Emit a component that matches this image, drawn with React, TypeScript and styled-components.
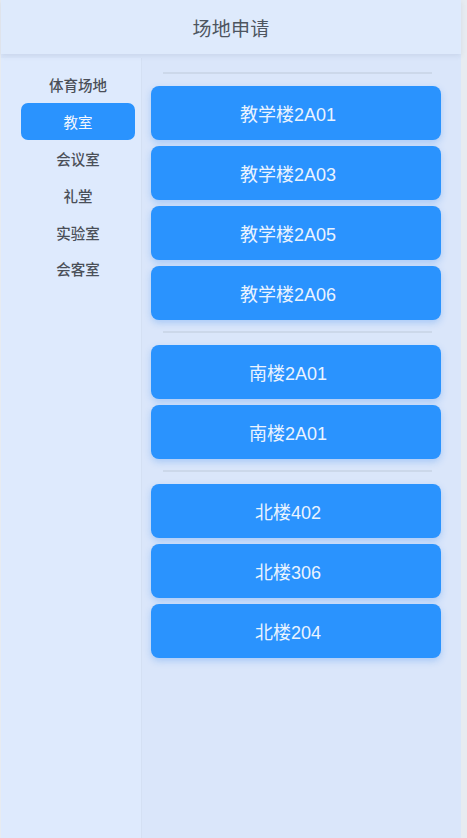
import React from "react";
import styled, { createGlobalStyle } from "styled-components";

const Global = createGlobalStyle`
  html, body { margin: 0; padding: 0; background: #e7ebf1; }
  body { font-family: "Liberation Sans", "Noto Sans CJK SC", sans-serif; }
  #root { height: 838px; }
`;

const Page = styled.div`
  width: 460px;
  height: 838px;
  margin-left: 1px;
  display: flex;
  flex-direction: column;
  background: #dae6fa;
`;

const Header = styled.header`
  position: relative;
  z-index: 2;
  height: 54px;
  flex: none;
  display: flex;
  align-items: center;
  justify-content: center;
  background: #deeafc;
  box-shadow: 0 2px 5px rgba(60, 80, 120, 0.1);
  color: #4d5560;
  font-family: "Noto Sans CJK SC", sans-serif;
  font-size: 19px;
  letter-spacing: 0.3px;
`;

const Body = styled.div`
  flex: 1;
  display: flex;
  min-height: 0;
  padding-top: 4px;
`;

const Sidebar = styled.nav`
  width: 141px;
  flex: none;
  box-sizing: border-box;
  padding: 8.5px 6px 0 20px;
  background: #deeafd;
  border-right: 1px solid #d4e0f3;
  display: flex;
  flex-direction: column;
`;

const NavItem = styled.div<{ $active?: boolean }>`
  height: 36.8px;
  display: flex;
  align-items: center;
  justify-content: center;
  border-radius: 7px;
  font-family: "Noto Sans CJK SC", sans-serif;
  font-size: 14.5px;
  font-weight: ${(p) => (p.$active ? 400 : 500)};
  color: ${(p) => (p.$active ? "#f4f8ff" : "#4a4f58")};
  background: ${(p) => (p.$active ? "#2a93fe" : "transparent")};
`;

const Content = styled.main`
  flex: 1;
  box-sizing: border-box;
  padding: 14.3px 20px 0 9px;
  display: flex;
  flex-direction: column;
`;

const Group = styled.section`
  display: flex;
  flex-direction: column;
  gap: 6px;
  margin-bottom: 11.5px;
`;

const Divider = styled.div`
  height: 2px;
  margin: 0 9px 11.5px 12px;
  background: #ccd8ea;
`;

const RoomButton = styled.button`
  height: 54px;
  border: none;
  border-radius: 8px;
  background: #2a93fe;
  color: #eaf3ff;
  font-family: "Liberation Sans", "Noto Sans CJK SC", sans-serif;
  font-size: 18px;
  box-shadow: 0 3px 7px rgba(42, 130, 240, 0.28);
  cursor: pointer;
  padding: 0 16px 0 0;
`;

const categories = ["体育场地", "教室", "会议室", "礼堂", "实验室", "会客室"];

const groups = [
  ["教学楼2A01", "教学楼2A03", "教学楼2A05", "教学楼2A06"],
  ["南楼2A01", "南楼2A01"],
  ["北楼402", "北楼306", "北楼204"],
];

export default function App() {
  return (
    <>
      <Global />
      <Page>
        <Header>场地申请</Header>
        <Body>
          <Sidebar>
            {categories.map((c) => (
              <NavItem key={c} $active={c === "教室"}>
                {c}
              </NavItem>
            ))}
          </Sidebar>
          <Content>
            {groups.map((g, i) => (
              <React.Fragment key={i}>
                <Divider />
                <Group>
                  {g.map((r, j) => (
                    <RoomButton key={j}>{r}</RoomButton>
                  ))}
                </Group>
              </React.Fragment>
            ))}
          </Content>
        </Body>
      </Page>
    </>
  );
}
